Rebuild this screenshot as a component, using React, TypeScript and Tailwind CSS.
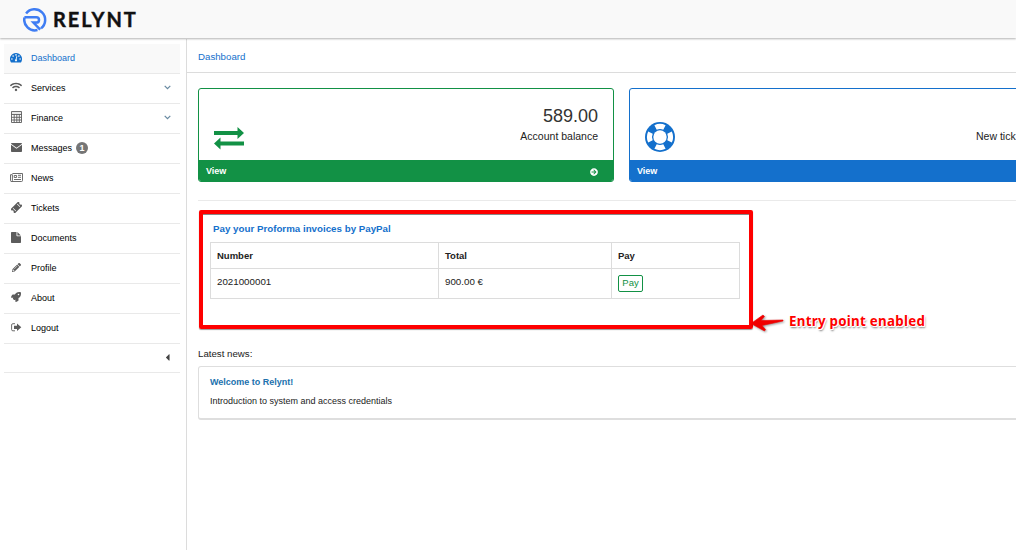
import type { ReactNode } from 'react';
import { FaWifi, FaPencilAlt, FaRocket, FaArrowCircleRight, FaCaretLeft } from 'react-icons/fa';

const Gauge = () => (
  <svg width="12" height="10" viewBox="0 0 12 10" className="mt-px">
    <path d="M6 0a6 6 0 0 1 5.300 8.900q-.3.600-.8.600h-9q-.5 0-.8-.6A6 6 0 0 1 6 0Z" fill="currentColor" />
    <g fill="#f9f9f9">
      <circle cx="1.900" cy="6" r=".8" /><circle cx="3.100" cy="3.100" r=".8" /><circle cx="6" cy="1.900" r=".8" />
      <circle cx="8.900" cy="3.100" r=".8" /><circle cx="10.100" cy="6" r=".8" />
    </g>
    <path d="m6.800 3.200-.7 3.600" stroke="#f9f9f9" strokeWidth=".9" />
    <circle cx="6" cy="7.300" r="1.100" fill="#f9f9f9" />
  </svg>
);
const Calculator = () => (
  <svg width="11" height="12" viewBox="0 0 11 12" fill="none" stroke="currentColor">
    <path d="M.5.500h10v11H.5zM.5 3.500h10M.5 6.300h10M.5 9h10M3.200 3.500v8M5.800 3.500v8M8.300 3.500v8" strokeWidth=".9" />
    <path d="M1 2h9" strokeWidth="1" opacity=".3" />
  </svg>
);
const Envelope = () => (
  <svg width="11" height="9" viewBox="0 0 11 9" fill="currentColor">
    <path d="M.8 0h9.400c.5 0 .8.400.8.800L5.500 4.800 0 .8C0 .4.300 0 .8 0Z" />
    <path d="M0 1.700 5.500 5.800 11 1.700v6.500c0 .5-.3.800-.8.800H.8C.3 9 0 8.700 0 8.200Z" />
  </svg>
);
const Newspaper = () => (
  <svg width="13" height="9" viewBox="0 0 13 9" fill="none" stroke="currentColor" strokeWidth=".9" className="shrink-0">
    <path d="M2.400.500h10.100v7q0 1-1 1H1.500q-1 0-1-1V1.700h1.900V7.500q0 1-1 1" />
    <path d="M4.200 2.500h2.400v2H4.200zM8 2.300h3M8 4.300h3M4 6.500h7" />
  </svg>
);
const Ticket = () => (
  <svg width="11" height="11" viewBox="0 0 11 11" fill="currentColor">
    <g transform="rotate(-45 5.500 5.500)">
      <path fillRule="evenodd" d="M0 2.500h11v2a1 1 0 0 0 0 2v2H0v-2a1 1 0 0 0 0-2ZM2.200 3.500v4h.7v-4ZM8.100 3.500v4h.7v-4Z" />
    </g>
  </svg>
);
const Document = () => (
  <svg width="10" height="11" viewBox="0 0 10 11" fill="currentColor">
    <path d="M.7 0H5.500v3.600q0 .6.600.6H10v6.100q0 .7-.7.700H.7Q0 11 0 10.300V.7Q0 0 .7 0Z" />
    <path d="M6.400.100 9.900 3.400H6.400Z" />
  </svg>
);
const SignOut = () => (
  <svg width="11" height="9" viewBox="0 0 11 9">
    <path d="M4 .7H1.900Q.6.700.6 2v4.500q0 1.300 1.300 1.300H4" fill="none" stroke="currentColor" strokeWidth=".9" />
    <path d="M3 2.700h3V.5l4.300 3.800L6 8.100V5.900H3Z" fill="currentColor" />
  </svg>
);
const Chevron = () => (
  <svg width="7" height="5" viewBox="0 0 7 5" fill="none" stroke="#6688a0" strokeWidth="1.200">
    <path d="m.7.800 2.800 2.800L6.300.8" />
  </svg>
);
const Exchange = () => (
  <svg width="30" height="23" viewBox="0 0 30 23" fill="#129145">
    <path d="M0 4h23.500V0L30 6l-6.500 6V8H0Z" />
    <path d="M30 14.500H6.500v-4L0 16.500l6.500 6v-4H30Z" />
  </svg>
);
const LifeRing = () => (
  <svg width="30" height="30" viewBox="-15 -15 30 30" className="mt-[33px] shrink-0">
    <circle r="15" fill="#1470cc" />
    <circle r="6.700" fill="#fff" />
    <g fill="#fff">
      <path id="band" d="M-5.600-11.800A13 13 0 0 1 5.600-11.800L3.300-7.300A8 8 0 0 0-3.300-7.300Z" />
      <use href="#band" transform="rotate(90)" />
      <use href="#band" transform="rotate(180)" />
      <use href="#band" transform="rotate(270)" />
    </g>
  </svg>
);
const LogoMark = () => (
  <svg width="24" height="25" viewBox="0 0 24 25" fill="none" stroke="#3f7df3" strokeWidth="2.500">
    <path d="M3.100 6.500A10.600 10.600 0 1 1 18 21.300" />
    <path d="M1.400 10.200H13.300a2.700 2.700 0 0 1 0 5.400H10.400l6.800 7.100" />
    <path d="M1.500 10.500A10.600 10.600 0 0 0 14.500 23" />
  </svg>
);

const items: { label: string; icon: ReactNode; sub?: boolean; badge?: string; active?: boolean }[] = [
  { label: 'Dashboard', icon: <Gauge />, active: true },
  { label: 'Services', icon: <FaWifi size={12} />, sub: true },
  { label: 'Finance', icon: <Calculator />, sub: true },
  { label: 'Messages', icon: <Envelope />, badge: '1' },
  { label: 'News', icon: <Newspaper /> },
  { label: 'Tickets', icon: <Ticket /> },
  { label: 'Documents', icon: <Document /> },
  { label: 'Profile', icon: <FaPencilAlt size={9} /> },
  { label: 'About', icon: <FaRocket size={10} /> },
  { label: 'Logout', icon: <SignOut /> },
];

function Sidebar() {
  return (
    <aside className="w-[187px] shrink-0 border-r border-[#dcdcdc] pl-1 pr-1.5 pt-[5px]">
      {items.map((it) => (
        <div
          key={it.label}
          className={`flex h-[30px] items-center border-b border-[#e9e9e9] pb-0.5 ${it.active ? 'bg-[#f9f9f9] text-[#1470cc]' : 'text-black'}`}
        >
          <span className={`-mt-px ml-1.5 flex w-3 justify-center ${it.active ? '' : 'text-[#5c5c5c]'}`}>{it.icon}</span>
          <span className="ml-[9px]">{it.label}</span>
          {it.badge && (
            <span className="ml-1 flex size-3 items-center justify-center rounded-full bg-[#757575] text-[9px] font-bold text-white">
              {it.badge}
            </span>
          )}
          {it.sub && <span className="ml-auto mr-[9px]"><Chevron /></span>}
        </div>
      ))}
      <div className="flex h-[29px] items-center justify-end border-b border-[#e9e9e9] pb-px pr-[7px] text-[#444]">
        <FaCaretLeft size={11} />
      </div>
    </aside>
  );
}

export default function App() {
  return (
    <div className="flex h-[550px] w-[1016px] flex-col overflow-hidden bg-white font-['Liberation_Sans',Arial,sans-serif] text-[9px] leading-3 text-[#222]">
      <header className="z-10 flex h-[38px] shrink-0 items-center bg-[#f9f9f9] pl-[23px] shadow-[0_1px_2px_rgba(0,0,0,0.3)]">
        <LogoMark />
        <span className="ml-[6px] font-['Lato',sans-serif] text-[20px] font-bold leading-6 tracking-[1.900px] text-[#111] [-webkit-text-stroke:0.400px_#111]">RELYNT</span>
      </header>
      <div className="flex min-h-0 flex-1 pt-px">
        <Sidebar />
        <main className="min-w-0 flex-1 overflow-hidden">
          <div className="flex h-[34px] items-center border-b border-[#dcdcdc] pl-[11px] pt-0.5 text-[9.700px] text-[#1470cc]">
            <span>Dashboard</span>
          </div>
          <div className="flex w-[847px] gap-[15px] pl-[11px] pt-[15px]">
            <section className="flex h-[94px] w-[416px] shrink-0 flex-col overflow-hidden rounded-[3px] border border-[#129145]">
              <div className="flex h-[71px] justify-between px-[15px] text-right">
                <div className="pt-[38px]"><Exchange /></div>
                <div>
                  <div className="mt-4 text-[18px] leading-[22px] text-[#333]">589.00</div>
                  <div className="mt-[3px] text-[10.500px]">Account balance</div>
                </div>
              </div>
              <div className="flex h-[21px] items-center justify-between bg-[#129145] pl-[7px] pr-[15px] font-bold text-white">
                <span>View</span><FaArrowCircleRight size={8} className="mt-0.5" />
              </div>
            </section>
            <section className="flex h-[94px] w-[416px] shrink-0 flex-col overflow-hidden rounded-[3px] border border-[#1470cc]">
              <div className="flex h-[71px] pl-[15px]">
                <LifeRing />
                <span className="ml-[301px] mt-[41px] whitespace-nowrap text-[10.500px]">New tick</span>
              </div>
              <div className="flex h-[21px] items-center bg-[#1470cc] pl-[7px] font-bold text-white">View</div>
            </section>
          </div>
          <div className="ml-[11px] mt-[18px] h-px bg-[#eaeaea]" />
          <div className="relative ml-3 mt-[9px] h-[119px] w-[554px] rounded-[2px] border-4 border-[#fe0000] px-[7px] pt-[9px] shadow-[0_1px_1px_rgba(0,0,0,0.400),inset_0_1px_0_#888]">
            <h2 className="pl-[3px] text-[9.750px] font-bold text-[#1470cc]">Pay your Proforma invoices by PayPal</h2>
            <table className="mt-[7px] w-[530px] table-fixed border-collapse border border-[#dcdcdc] text-left">
              <colgroup><col className="w-[228px]" /><col className="w-[173px]" /><col className="w-[128px]" /></colgroup>
              <thead>
                <tr className="h-[26px] text-[9.500px]">
                  {['Number', 'Total', 'Pay'].map((h) => <th key={h} className="border border-[#dcdcdc] px-1.5 py-0">{h}</th>)}
                </tr>
              </thead>
              <tbody>
                <tr className="h-[30px] text-[9.750px]">
                  <td className="border border-[#dcdcdc] px-1.5 pb-[3px] pt-0">2021000001</td>
                  <td className="border border-[#dcdcdc] px-1.5 pb-[3px] pt-0">900.00 €</td>
                  <td className="border border-[#dcdcdc] px-1.5 py-0">
                    <button className="block h-[17px] w-[25px] rounded-[2px] border border-[#129145] pb-0.5 text-center text-[9.500px] leading-[13px] text-[#129145]">Pay</button>
                  </td>
                </tr>
              </tbody>
            </table>
            <div className="absolute left-[547px] top-[98px] flex items-start">
              <svg width="35" height="20" viewBox="0 0 35 20" fill="#f00000" className="drop-shadow-[1px_1px_1px_rgba(0,0,0,0.4)]">
                <path d="M1 11.500 13 3l1.500 1.500L11 8.500 33 8v1L12 13.500l3.500 4-1 1.500Z" stroke="#f00000" strokeWidth=".6" />
              </svg>
              <span className="ml-[4px] whitespace-nowrap font-['Noto_Sans','Open_Sans',sans-serif] text-[13.330px] font-bold leading-[18px] tracking-[0.270px] text-[#fe0000] [text-shadow:1px_0_0_#fff,-1px_0_0_#fff,0_1px_0_#fff,0_-1px_0_#fff,1px_1px_0_#fff,1px_2px_2px_#777]">
                Entry point enabled
              </span>
            </div>
          </div>
          <p className="ml-[11px] mt-[19px] text-[9.700px]">Latest news:</p>
          <article className="ml-[11px] mt-[6px] h-[54px] w-[840px] rounded-[3px] border border-b-2 border-[#dedede] px-[11px] pt-[9px]">
            <h3 className="font-bold text-[#2071ad]">Welcome to Relynt!</h3>
            <p className="mt-[7px]">Introduction to system and access credentials</p>
          </article>
        </main>
      </div>
    </div>
  );
}
